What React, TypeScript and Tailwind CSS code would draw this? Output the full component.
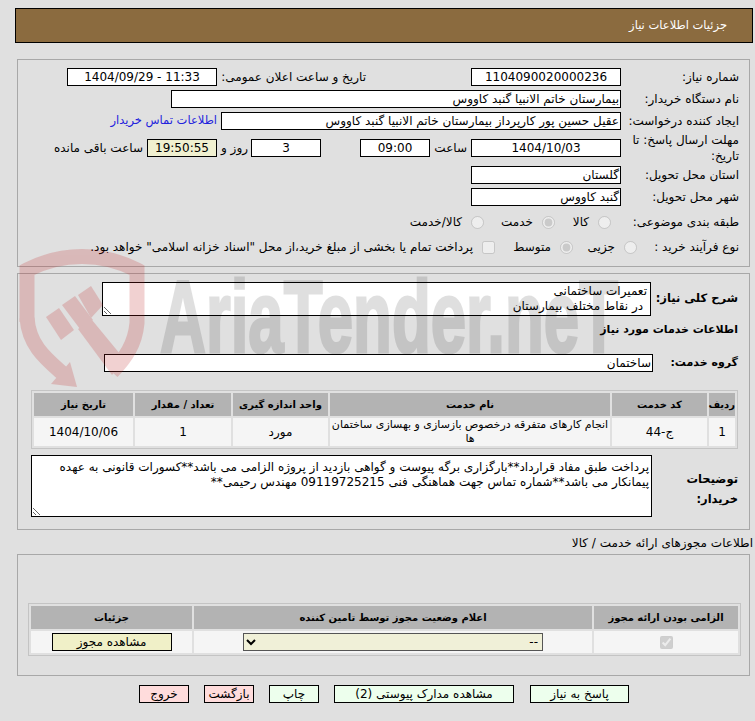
import React from 'react';

const font = { fontFamily: 'Tahoma, "DejaVu Sans", sans-serif' };

const Box = ({ className, children }: { className: string; children?: React.ReactNode }) => (
  <div className={`h-[18px] border border-black bg-white flex items-center overflow-hidden whitespace-nowrap ${className}`}>{children}</div>
);

const Label = ({ children }: { children: React.ReactNode }) => (
  <div className="w-[118px] shrink-0 leading-[16px]">{children}</div>
);

const Radio = ({ label, checked, className }: { label: string; checked?: boolean; className: string }) => (
  <label className={`flex items-center gap-[9px] shrink-0 ${className}`}>
    <input type="radio" disabled checked={checked} readOnly className="m-0 w-[13px] h-[13px]" />
    <span>{label}</span>
  </label>
);

// sits over the whole page, so it also tints the white inputs
const Watermark = () => (
  <svg dir="ltr" className="absolute left-0 top-0 z-10 pointer-events-none" width="755" height="721" viewBox="0 0 755 721">
    <text x="160" y="352" direction="ltr" fontSize="102" fontWeight="700" fill="#000" stroke="#000" strokeWidth="3" opacity="0.12" textLength="458" lengthAdjust="spacingAndGlyphs" fontFamily="Liberation Sans, sans-serif">AriaTender.neT</text>
    <g opacity="0.2">
      <path d="M27 322 L27 270 C62 252 102 252 137 270 L137 323 C135 345 125 358 112 372" fill="none" stroke="#be1e1e" strokeWidth="15" />
      <path d="M27 318 C29 345 45 358 62 373" fill="none" stroke="#be1e1e" strokeWidth="15" />
      <path d="M70 362 L77 387 L51 384 Z" fill="#be1e1e" />
      <path d="M46 317 L59 308 L74 330 L61 340 Z" fill="#be1e1e" />
      <path d="M62 305 L75 296 L93 320 L80 329 Z" fill="#be1e1e" />
      <path d="M78 295 L91 286 L103 305 L91 318 Z" fill="#be1e1e" />
      <path d="M78 329 L92 320 L125 360 L112 375 Z" fill="#be1e1e" />
    </g>
  </svg>
);

const Btn = ({ children, className }: { children: React.ReactNode; className: string }) => (
  <button className={`h-[18px] border border-black text-[12px] leading-[14px] text-black p-0 ${className}`}>{children}</button>
);

const App = () => {
  return (
    <div dir="rtl" className="relative isolate w-[755px] h-[721px] overflow-hidden bg-[#e0e0e0] pt-[8px] text-[12px] text-black" style={font}>
      <Watermark />

      <div className="ml-[15px] mr-[2px] h-[35px] bg-[#8b6b3f] border border-black text-white text-[11.5px] flex items-center pr-[25px]">
        جزئیات اطلاعات نیاز
      </div>

      {/* general info */}
      <div className="mt-[16px] ml-[17px] mr-[5px] h-[208px] border border-[#a8a8a8] pt-[8px] pr-[10px]">
        <div className="flex items-center h-[18px]">
          <Label>شماره نیاز:</Label>
          <Box className="w-[150px] justify-center">1104090020000236</Box>
          <div className="w-[254px] pr-[105px] whitespace-nowrap">تاریخ و ساعت اعلان عمومی:</div>
          <Box className="w-[150px] justify-center"><span dir="ltr">1404/09/29 - 11:33</span></Box>
        </div>
        <div className="flex items-center h-[18px] mt-[4px]">
          <Label>نام دستگاه خریدار:</Label>
          <Box className="w-[450px] pr-[1px]">بیمارستان خاتم الانبیا گنبد کاووس</Box>
        </div>
        <div className="flex items-center h-[18px] mt-[4px]">
          <Label>ایجاد کننده درخواست:</Label>
          <Box className="w-[400px] pr-[1px]">عقیل حسین پور کارپرداز بیمارستان خاتم الانبیا گنبد کاووس</Box>
          <span className="mr-[4px] text-[#2222dd] text-[11.5px] whitespace-nowrap">اطلاعات تماس خریدار</span>
        </div>
        <div className="flex items-center h-[32px] mt-[2px]">
          <Label>مهلت ارسال پاسخ: تا تاریخ:</Label>
          <Box className="w-[150px] justify-center">1404/10/03</Box>
          <span className="w-[41px] pr-[4px]">ساعت</span>
          <Box className="w-[70px] justify-center">09:00</Box>
          <div className="w-[39px]" />
          <Box className="w-[70px] justify-center">3</Box>
          <span className="w-[34px] pr-[3px] whitespace-nowrap">روز و</span>
          <Box className="w-[70px] justify-center !bg-[#f0f0d0]">19:50:55</Box>
          <span className="mr-[4px] whitespace-nowrap">ساعت باقی مانده</span>
        </div>
        <div className="flex items-center h-[18px] mt-[2px]">
          <Label>استان محل تحویل:</Label>
          <Box className="w-[150px] pr-[1px]">گلستان</Box>
        </div>
        <div className="flex items-center h-[18px] mt-[4px]">
          <Label>شهر محل تحویل:</Label>
          <Box className="w-[150px] pr-[1px]">گنبد کاووس</Box>
        </div>
        <div className="flex items-center h-[18px] mt-[7px]">
          <Label>طبقه بندی موضوعی:</Label>
          <Radio label="کالا" className="w-[66px] pr-[10px]" />
          <Radio label="خدمت" checked className="w-[71px]" />
          <Radio label="کالا/خدمت" className="w-[80px]" />
        </div>
        <div className="flex items-center h-[18px] mt-[7px]">
          <div className="w-[102px] shrink-0">نوع فرآیند خرید :</div>
          <Radio label="جزیی" className="w-[64px]" />
          <Radio label="متوسط" checked className="w-[78px]" />
          <input type="checkbox" disabled className="m-0 w-[13px] h-[13px]" />
          <span className="mr-[9px] whitespace-nowrap">پرداخت تمام یا بخشی از مبلغ خرید،از محل "اسناد خزانه اسلامی" خواهد بود.</span>
        </div>
      </div>

      {/* service info */}
      <div className="mt-[6px] ml-[17px] mr-[5px] h-[257px] border border-[#a8a8a8] pt-[8px] pr-[11px]">
        <div className="flex items-center h-[34px]">
          <div className="w-[87px] shrink-0 font-bold text-[11.5px] whitespace-nowrap">شرح کلی نیاز:</div>
          <textarea readOnly className="w-[549px] h-[34px] border border-black bg-white pr-[3px] pt-[1px] text-[12px] leading-[15px] resize overflow-hidden" defaultValue={'تعمیرات ساختمانی\n در نقاط مختلف بیمارستان'} />
        </div>
        <div className="mt-[6px] font-bold text-[11px] leading-[16px]">اطلاعات خدمات مورد نیاز</div>
        <div className="flex items-center h-[18px] mt-[16px]">
          <div className="w-[85px] shrink-0 font-bold text-[11px] whitespace-nowrap">گروه خدمت:</div>
          <Box className="w-[549px] pr-[1px]">ساختمان</Box>
        </div>

        <table className="mt-[18px] w-[707px] table-fixed border border-[#c4c4c4] border-separate border-spacing-[2px] text-center">
          <thead>
            <tr className="h-[23px] bg-[#b3b3b3] text-[10px] font-bold">
              <th className="w-[26px] p-0 whitespace-nowrap">ردیف</th>
              <th className="w-[95px] p-0">کد خدمت</th>
              <th className="w-[280px] p-0">نام خدمت</th>
              <th className="w-[95px] p-0 whitespace-nowrap">واحد اندازه گیری</th>
              <th className="w-[96px] p-0">تعداد / مقدار</th>
              <th className="p-0">تاریخ نیاز</th>
            </tr>
          </thead>
          <tbody>
            <tr className="h-[28px] bg-[#f5f5f5] leading-[14px]">
              <td className="p-0">1</td>
              <td className="p-0">ج-44</td>
              <td className="p-0 text-[11px] whitespace-nowrap">انجام کارهای متفرقه درخصوص بازسازی و بهسازی ساختمان<br />ها</td>
              <td className="p-0">مورد</td>
              <td className="p-0">1</td>
              <td className="p-0">1404/10/06</td>
            </tr>
          </tbody>
        </table>

        <div className="flex mt-[6px]">
          <div className="w-[86px] shrink-0 font-bold text-[11.5px] pt-[14px] leading-[20px]">توضیحات خریدار:</div>
          <textarea readOnly className="w-[621px] h-[62px] border border-black bg-white pr-[2px] pt-[4px] text-[12px] leading-[15px] resize overflow-hidden" defaultValue="پرداخت طبق مفاد قرارداد**بارگزاری برگه پیوست و گواهی بازدید از پروژه الزامی می باشد**کسورات قانونی به عهده پیمانکار می باشد**شماره تماس جهت هماهنگی فنی 09119725215 مهندس رحیمی**" />
        </div>
      </div>

      <div className="mt-[5px] pr-[2px] leading-[16px]">اطلاعات مجوزهای ارائه خدمت / کالا</div>

      {/* permits */}
      <div className="mt-[3px] ml-[17px] mr-[5px] h-[122px] border border-[#a8a8a8] pt-[48px] pr-[8px]">
        <table className="w-[713px] table-fixed border border-[#c4c4c4] border-separate border-spacing-[2px] text-center">
          <thead>
            <tr className="h-[23px] bg-[#b3b3b3] text-[10px] font-bold">
              <th className="w-[144px] p-0">الزامی بودن ارائه مجوز</th>
              <th className="w-[398px] p-0">اعلام وضعیت مجوز توسط تامین کننده</th>
              <th className="p-0">جزئیات</th>
            </tr>
          </thead>
          <tbody>
            <tr className="h-[22px] bg-[#f5f5f5]">
              <td className="p-0"><input type="checkbox" checked disabled readOnly className="align-middle w-[13px] h-[13px]" /></td>
              <td className="p-0">
                <select disabled className="w-[300px] h-[18px] border border-[#555] bg-[#f0f0d8] text-[12px] text-black opacity-100 align-middle">
                  <option>--</option>
                </select>
              </td>
              <td className="p-0"><div className="mx-auto w-[120px] h-[18px] border border-black bg-[#f0f0c8] leading-[16px]">مشاهده مجوز</div></td>
            </tr>
          </tbody>
        </table>
      </div>

      <div className="flex mt-[9px] pr-[126px]">
        <Btn className="w-[99px] bg-[#edffed]">پاسخ به نیاز</Btn>
        <Btn className="w-[180px] mr-[16px] bg-[#edffed]">مشاهده مدارک پیوستی (2)</Btn>
        <Btn className="w-[50px] mr-[15px] bg-[#edffed]">چاپ</Btn>
        <Btn className="w-[50px] mr-[15px] bg-[#ffdcdc]">بازگشت</Btn>
        <Btn className="w-[50px] mr-[15px] bg-[#ffdcdc]">خروج</Btn>
      </div>
    </div>
  );
};

export default App;
